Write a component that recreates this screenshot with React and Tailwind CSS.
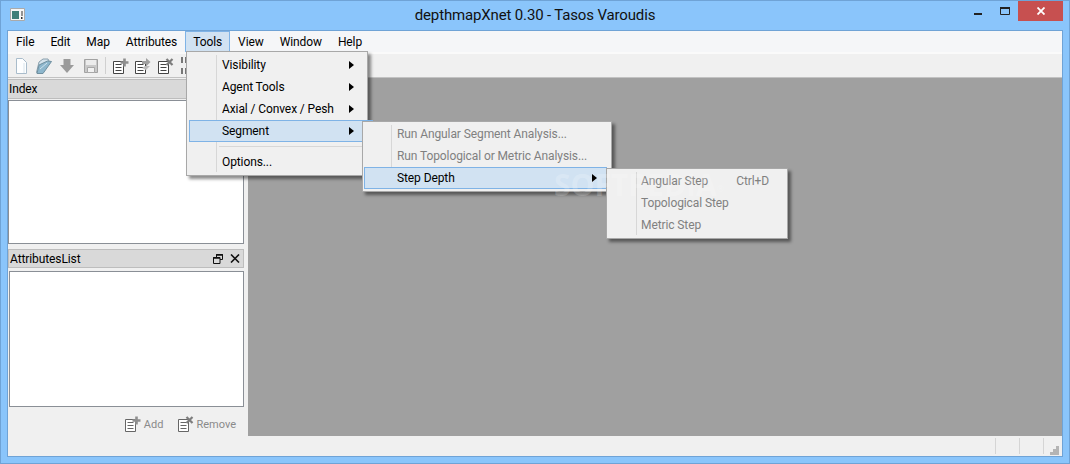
const font = { fontFamily: 'Roboto, "Open Sans", sans-serif' };

function DocBase({ stroke = "#444" }) {
  return (
    <>
      <path d="M.5 3.500h10v12H.5z" fill="#fff" stroke={stroke} />
      <path d="M2.500 6.500h6M2.500 9.500h6M2.500 12.500h6" stroke={stroke} />
    </>
  );
}

function AddIcon({ stroke }) {
  return (
    <svg width="16" height="16" viewBox="0 0 16 16" className="shrink-0">
      <DocBase stroke={stroke} />
      <path d="M11.500 .5v8M7.500 4.500h8" stroke="#8f8f8f" strokeWidth="2.600" />
    </svg>
  );
}

function EditIcon() {
  return (
    <svg width="16" height="16" viewBox="0 0 16 16" className="shrink-0">
      <DocBase />
      <path d="M7 3h4V0l4.500 4L11 8.500V6H7z" fill="#a0a0a0" />
      <path d="M7 10l3-2h5l-4 4z" fill="#bbb" />
    </svg>
  );
}

function RemoveIcon({ stroke }) {
  return (
    <svg width="16" height="16" viewBox="0 0 16 16" className="shrink-0">
      <DocBase stroke={stroke} />
      <path d="M8.500 1l6 6M14.500 1l-6 6" stroke="#7d7d7d" strokeWidth="2.200" />
    </svg>
  );
}

function Toolbar() {
  return (
    <div className="flex h-[26px] items-center border-t-2 border-b border-t-[#fafafa] border-b-[#c2c2c2] bg-[#f0f0f0] pl-[8px]">
      <svg width="11" height="16" viewBox="0 0 11 16" className="shrink-0">
        <path d="M.5.5h6l4 4v11H.5z" fill="#fdfeff" stroke="#a9bccb" />
        <path d="M8 5v10" stroke="#d8e4ec" />
      </svg>
      <svg width="16" height="16" viewBox="0 0 16 16" className="ml-[9px] shrink-0">
        <path d="M.5 14.500L3 4l4-3h5l1 2z" fill="#d5e3ec" stroke="#8aa0ad" />
        <path d="M1 15.500h6L15.500 3.500l-4-.5L3 7z" fill="#8db6cc" stroke="#6f8f9f" />
        <path d="M4 11l7-6" stroke="#cfe2ee" />
      </svg>
      <svg width="14" height="14" viewBox="0 0 14 14" className="ml-[8px] shrink-0">
        <path d="M3.500 0h7v6H14l-7 8-7-8h3.500z" fill="#9b9b9b" />
      </svg>
      <svg width="14" height="14" viewBox="0 0 14 14" className="ml-[10px] shrink-0">
        <path d="M.5.5h13v13H.5z" fill="#c9c9c9" stroke="#a2a2a2" />
        <path d="M2 1h10v5H2z" fill="#ececec" />
        <path d="M3.500 8.500h7v5h-7z" fill="#f1f1f1" stroke="#a8a8a8" />
      </svg>
      <div className="ml-[7px] h-[17px] w-px bg-[#d0d0d0]" />
      <div className="ml-[7px]"><AddIcon /></div>
      <div className="ml-[6px]"><EditIcon /></div>
      <div className="ml-[7px]"><RemoveIcon /></div>
      <div className="ml-[7px] h-[17px] w-[6px] shrink-0 border-x-2 border-dashed border-[#777]" />
    </div>
  );
}

function Sidebar() {
  return (
    <div className="flex w-[240px] shrink-0 flex-col pt-px">
      <div className="flex h-[20px] items-center border-y border-[#bdbdbd] bg-[#d9d9d9] pl-px">Index</div>
      <div className="mr-[4px] mt-px h-[144px] border border-[#8a8f96] bg-white" />
      <div className="mr-[4px] mt-[5px] flex h-[19px] items-center justify-between border border-[#bdbdbd] bg-[#d9d9d9] pr-[2px] pl-px">
        <span>AttributesList</span>
        <div className="flex items-center gap-[7px]">
          <svg width="10" height="10" viewBox="0 0 10 10">
            <path d="M3.500 3V.5h6v5H7M.5 3.500h6.500v6H.5z" fill="none" stroke="#111" />
            <path d="M3 1h7M0 4h7" stroke="#111" strokeWidth="1.400" />
          </svg>
          <svg width="10" height="9" viewBox="0 0 10 9" className="mr-px">
            <path d="M1 .5l8 8M9 .5l-8 8" stroke="#111" strokeWidth="1.600" />
          </svg>
        </div>
      </div>
      <div className="ml-px mr-[4px] mt-[3px] h-[136px] border border-[#8a8f96] bg-white" />
      <div className="mr-[12px] mt-[9px] flex items-center justify-end text-[11px] tracking-normal text-[#8a8a8a]">
        <AddIcon stroke="#666" />
        <span className="ml-[3px] mr-[15px]">Add</span>
        <RemoveIcon stroke="#666" />
        <span className="ml-[2px]">Remove</span>
      </div>
    </div>
  );
}

function Row({ label, arrow, active, muted, shortcut, className }) {
  return (
    <div
      className={`relative flex h-[22px] items-center border ${className} ${
        active ? "border-[#7fb3e6] bg-[#d1e2f2]" : "border-transparent"
      } ${muted ? "text-[#808080]" : "text-black"}`}
    >
      <span>{label}</span>
      {shortcut && <span className="ml-auto">{shortcut}</span>}
      {arrow && (
        <svg width="5" height="8" viewBox="0 0 5 8" className={`absolute top-[6px] ${arrow}`}>
          <path d="M0 0l5 4-5 4z" fill="#000" />
        </svg>
      )}
    </div>
  );
}

function Menu({ className, gutter, children }) {
  return (
    <div className={`absolute border border-[#a8a8a8] bg-[#f0f0f0] py-[2px] shadow-[3px_3px_3px_rgba(0,0,0,0.45)] ${className}`}>
      <div className={`absolute bottom-[3px] top-[3px] w-px bg-[#d7d7d7] ${gutter}`} />
      {children}
    </div>
  );
}

export default function App() {
  const menus = ["File", "Edit", "Map", "Attributes", "Tools", "View", "Window", "Help"];
  return (
    <div style={font} className="relative flex h-[464px] w-[1070px] flex-col overflow-hidden border border-[#6fa3d6] bg-[#8ac5fb] text-[12px] leading-none tracking-[-0.1px] text-black">
      <div className="relative flex h-[29px] shrink-0 items-center justify-center">
        <svg width="15" height="13" viewBox="0 0 15 13" className="absolute left-[9px] top-[7px]">
          <path d="M.5.5h14v12H.5z" fill="#f6f6f6" stroke="#aaa" />
          <path d="M2 3h7v8H2z" fill="#3f7f79" />
          <path d="M11 9h1.500v2H11zM11.500 3h1v5h-1z" fill="#333" />
        </svg>
        <span className="text-[15px] tracking-[-0.15px] text-[#111]">depthmapXnet 0.30 - Tasos Varoudis</span>
        <div className="absolute right-[87px] top-[12px] h-[2px] w-[8px] bg-[#222]" />
        <svg width="10" height="8" viewBox="0 0 10 8" className="absolute right-[59px] top-[6px]">
          <path d="M.5.5h9v7h-9z" fill="none" stroke="#222" />
          <path d="M0 1h10" stroke="#222" strokeWidth="2" />
        </svg>
        <div className="absolute right-[6px] top-0 flex h-[20px] w-[45px] items-center justify-center bg-[#c75050]">
          <svg width="8" height="8" viewBox="0 0 8 8">
            <path d="M.5.5l7 7M7.500.5l-7 7" stroke="#fff" strokeWidth="1.800" />
          </svg>
        </div>
      </div>
      <div className="mx-[6px] mb-[6px] flex min-h-0 flex-1 flex-col border border-[#6fa3d6]">
        <div className="flex h-[21px] shrink-0 items-center bg-[#f5f6f8]">
          {menus.map((m) => (
            <div
              key={m}
              className={`flex h-[21px] items-center border px-[7px] ${m === "Tools" ? "border-[#7fb3e6] bg-[#d1e2f2]" : "border-transparent"}`}
            >
              {m}
            </div>
          ))}
        </div>
        <Toolbar />
        <div className="flex min-h-0 flex-1 bg-[#f0f0f0]">
          <Sidebar />
          <div className="flex-1 bg-[#a0a0a0]" />
        </div>
        <div className="flex h-[20px] shrink-0 items-center justify-end bg-[#f0f0f0] pr-[3px]">
          <div className="mr-[23px] h-[16px] w-px bg-[#d5d5d5]" />
          <div className="mr-[23px] h-[16px] w-px bg-[#d5d5d5]" />
          <div className="mr-[6px] h-[16px] w-px bg-[#d5d5d5]" />
          <svg width="9" height="9" viewBox="0 0 9 9" className="mt-[8px]">
            <path d="M6 0h3v3H6zM3 3h3v3H3zM6 3h3v3H6zM0 6h3v3H0zM3 6h3v3H3zM6 6h3v3H6z" fill="#b4b4b4" />
          </svg>
        </div>
      </div>

      <Menu className="left-[185px] top-[50px] h-[125px] w-[182px]" gutter="left-[29px]">
        <div className="pl-[2px]">
          <Row label="Visibility" arrow="left-[159px]" className="pl-[32px]" />
          <Row label="Agent Tools" arrow="left-[159px]" className="pl-[32px]" />
          <Row label="Axial / Convex / Pesh" arrow="left-[159px]" className="pl-[32px]" />
          <Row label="Segment" arrow="left-[159px]" active className="-mr-[6px] pl-[32px]" />
          <div className="my-[4px] ml-[30px] h-px bg-[#d7d7d7]" />
          <Row label="Options..." className="pl-[32px]" />
        </div>
      </Menu>

      <Menu className="left-[361px] top-[120px] h-[71px] w-[250px]" gutter="left-[28px]">
        <div className="-mt-px pl-px">
          <Row label="Run Angular Segment Analysis..." muted className="pl-[32px]" />
          <Row label="Run Topological or Metric Analysis..." muted className="pl-[32px]" />
          <Row label="Step Depth" arrow="left-[227px]" active className="mr-[4px] pl-[32px]" />
        </div>
      </Menu>

      <Menu className="left-[605px] top-[167px] h-[71px] w-[182px]" gutter="left-[29px]">
        <div className="-mt-px pl-px">
          <Row label="Angular Step" muted shortcut="Ctrl+D" className="pl-[32px] pr-[17px]" />
          <Row label="Topological Step" muted className="pl-[32px]" />
          <Row label="Metric Step" muted className="pl-[32px]" />
        </div>
      </Menu>

      <div className="pointer-events-none absolute left-[553px] top-[169px] text-[30px] font-bold tracking-normal text-white/20" style={{ fontFamily: '"Open Sans", sans-serif' }}>
        SOFTPEDIA<sup className="text-[9px] font-normal">®</sup>
      </div>
    </div>
  );
}
